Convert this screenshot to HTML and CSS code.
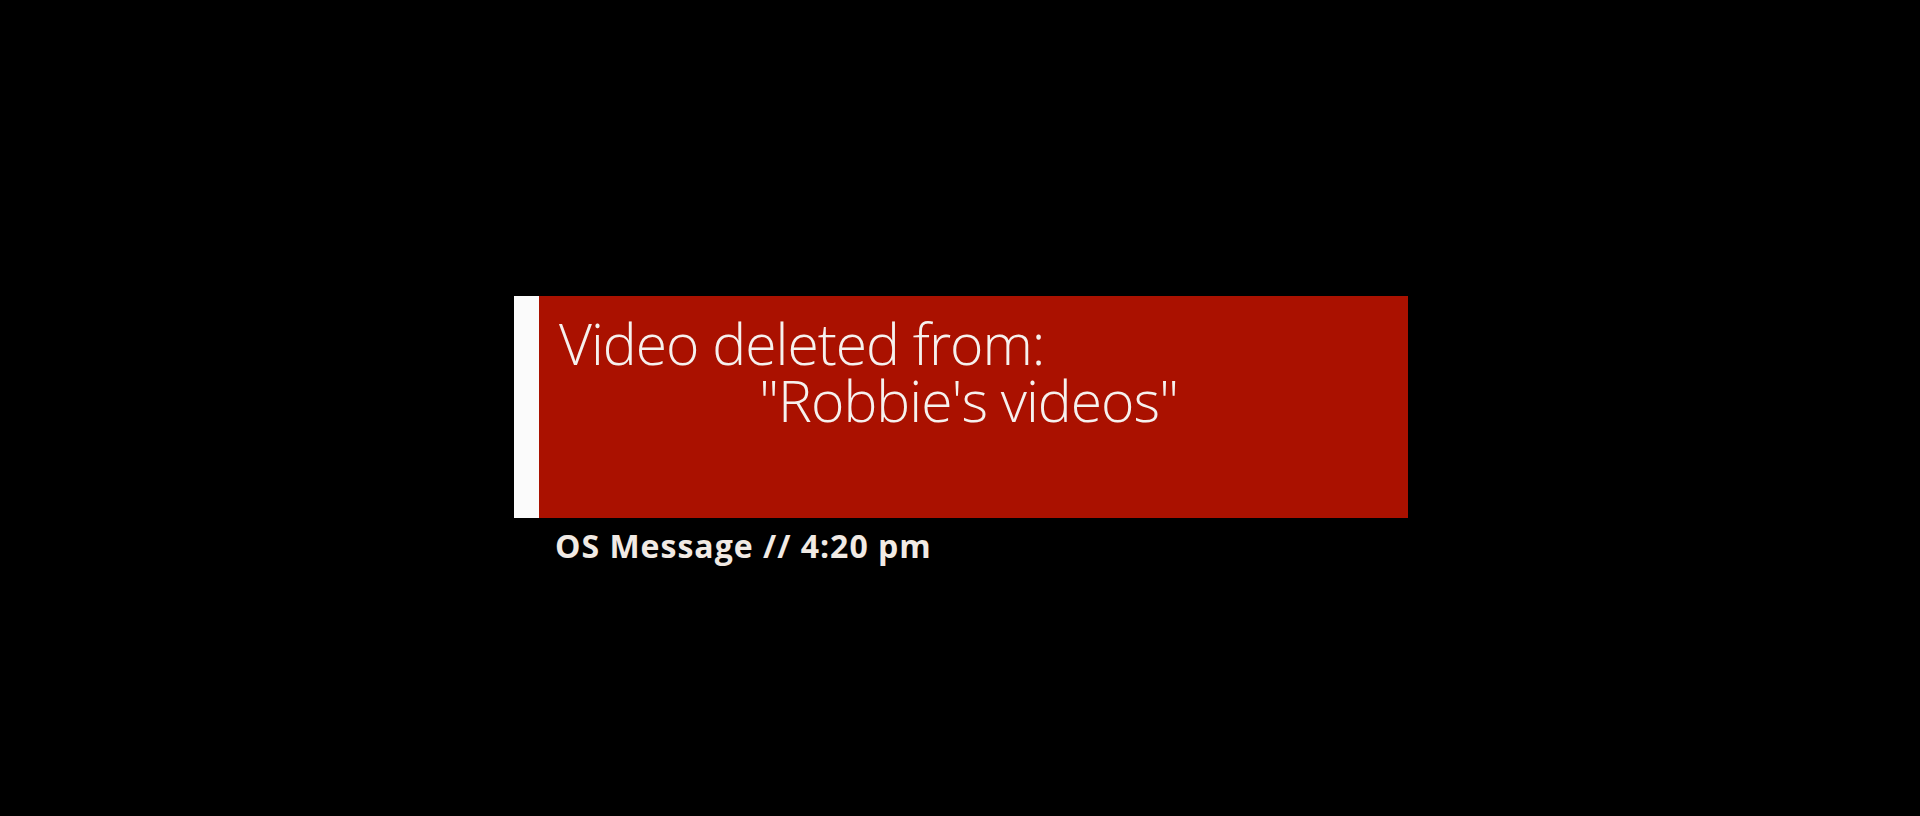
FILE: index.html
```html
<!DOCTYPE html>
<html lang="en">
<head>
  <meta charset="UTF-8" />
  <meta name="viewport" content="width=device-width, initial-scale=1" />
  <title>OS Message</title>
  <link rel="stylesheet" href="styles.css">
</head>
<body>

<main class="notice">
  <div class="notice-box">
    <div class="notice-strip"></div>
    <div class="notice-body">
      <p class="line">Video deleted from:</p>
      <p class="line line-indent">"Robbie's videos"</p>
    </div>
  </div>
  <div class="notice-meta">OS Message // 4:20 pm</div>
</main>

</body>
</html>
```

FILE: styles.css
```css
body {
  margin: 0;
  background-color: #000;
  color: #f6f1ee;
  font-family: 'Open Sans', 'Liberation Sans', sans-serif;
  min-height: 100vh;
}
.notice {
  width: 894px;
  padding: 296px 0 0 514px;
}
.notice-box {
  display: flex;
  height: 222px;
  background-color: #aa1100;
}
.notice-strip {
  flex: none;
  width: 25px;
  background-color: #fbfbfb;
}
.notice-body {
  flex: 1;
  padding: 19px 0 0 20px;
}
.line {
  margin: 0;
  font-size: 57px;
  font-weight: 300;
  line-height: 57px;
  letter-spacing: -1px;
  white-space: nowrap;
}
.line-indent {
  padding-left: 200px;
}
.notice-meta {
  margin-top: 8px;
  padding-left: 41px;
  font-size: 32px;
  font-weight: 700;
  line-height: 40px;
  letter-spacing: 1px;
  color: #f1eae4;
}
```
